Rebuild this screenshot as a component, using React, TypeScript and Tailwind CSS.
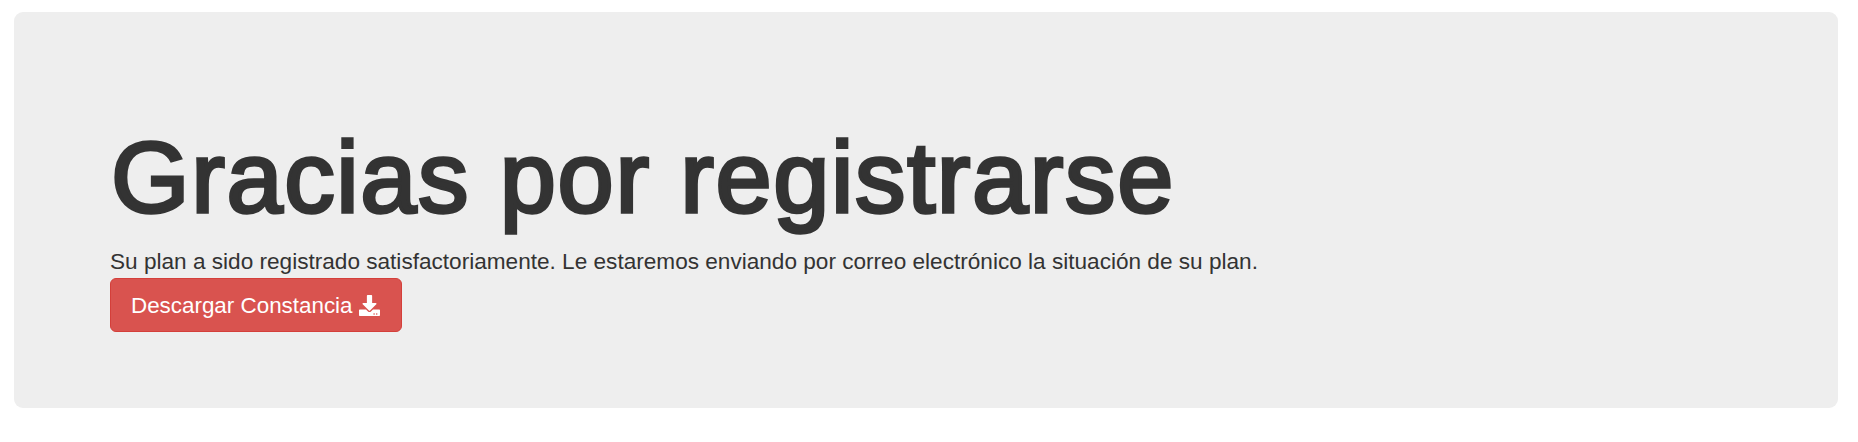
import { FaDownload } from 'react-icons/fa';

export default function App() {
  return (
    <div className="min-h-screen bg-white pt-3 pl-[14px] pr-[20px] font-['Liberation_Sans',Arial,sans-serif]">
      <div className="h-[396px] rounded-[9px] bg-[#eeeeee] pl-[96px] pt-[106px]">
        <h1 className="pl-px text-[101px] leading-[118px] font-normal tracking-[1.6px] text-[#333333] [-webkit-text-stroke:3.4px_#333333]">
          Gracias por registrarse
        </h1>
        <p className="mt-[11px] text-[22.6px] leading-[30px] text-[#333333]">
          Su plan a sido registrado satisfactoriamente. Le estaremos enviando por correo electrónico la situación de su plan.
        </p>
        <button className="mt-px flex h-[54px] w-[292px] items-center gap-[6px] whitespace-nowrap rounded-[6px] border border-[#d43f3a] bg-[#d9534f] pl-[20px] pt-px text-[22.4px] text-white">
          Descargar Constancia
          <FaDownload size={21} />
        </button>
      </div>
    </div>
  );
}
